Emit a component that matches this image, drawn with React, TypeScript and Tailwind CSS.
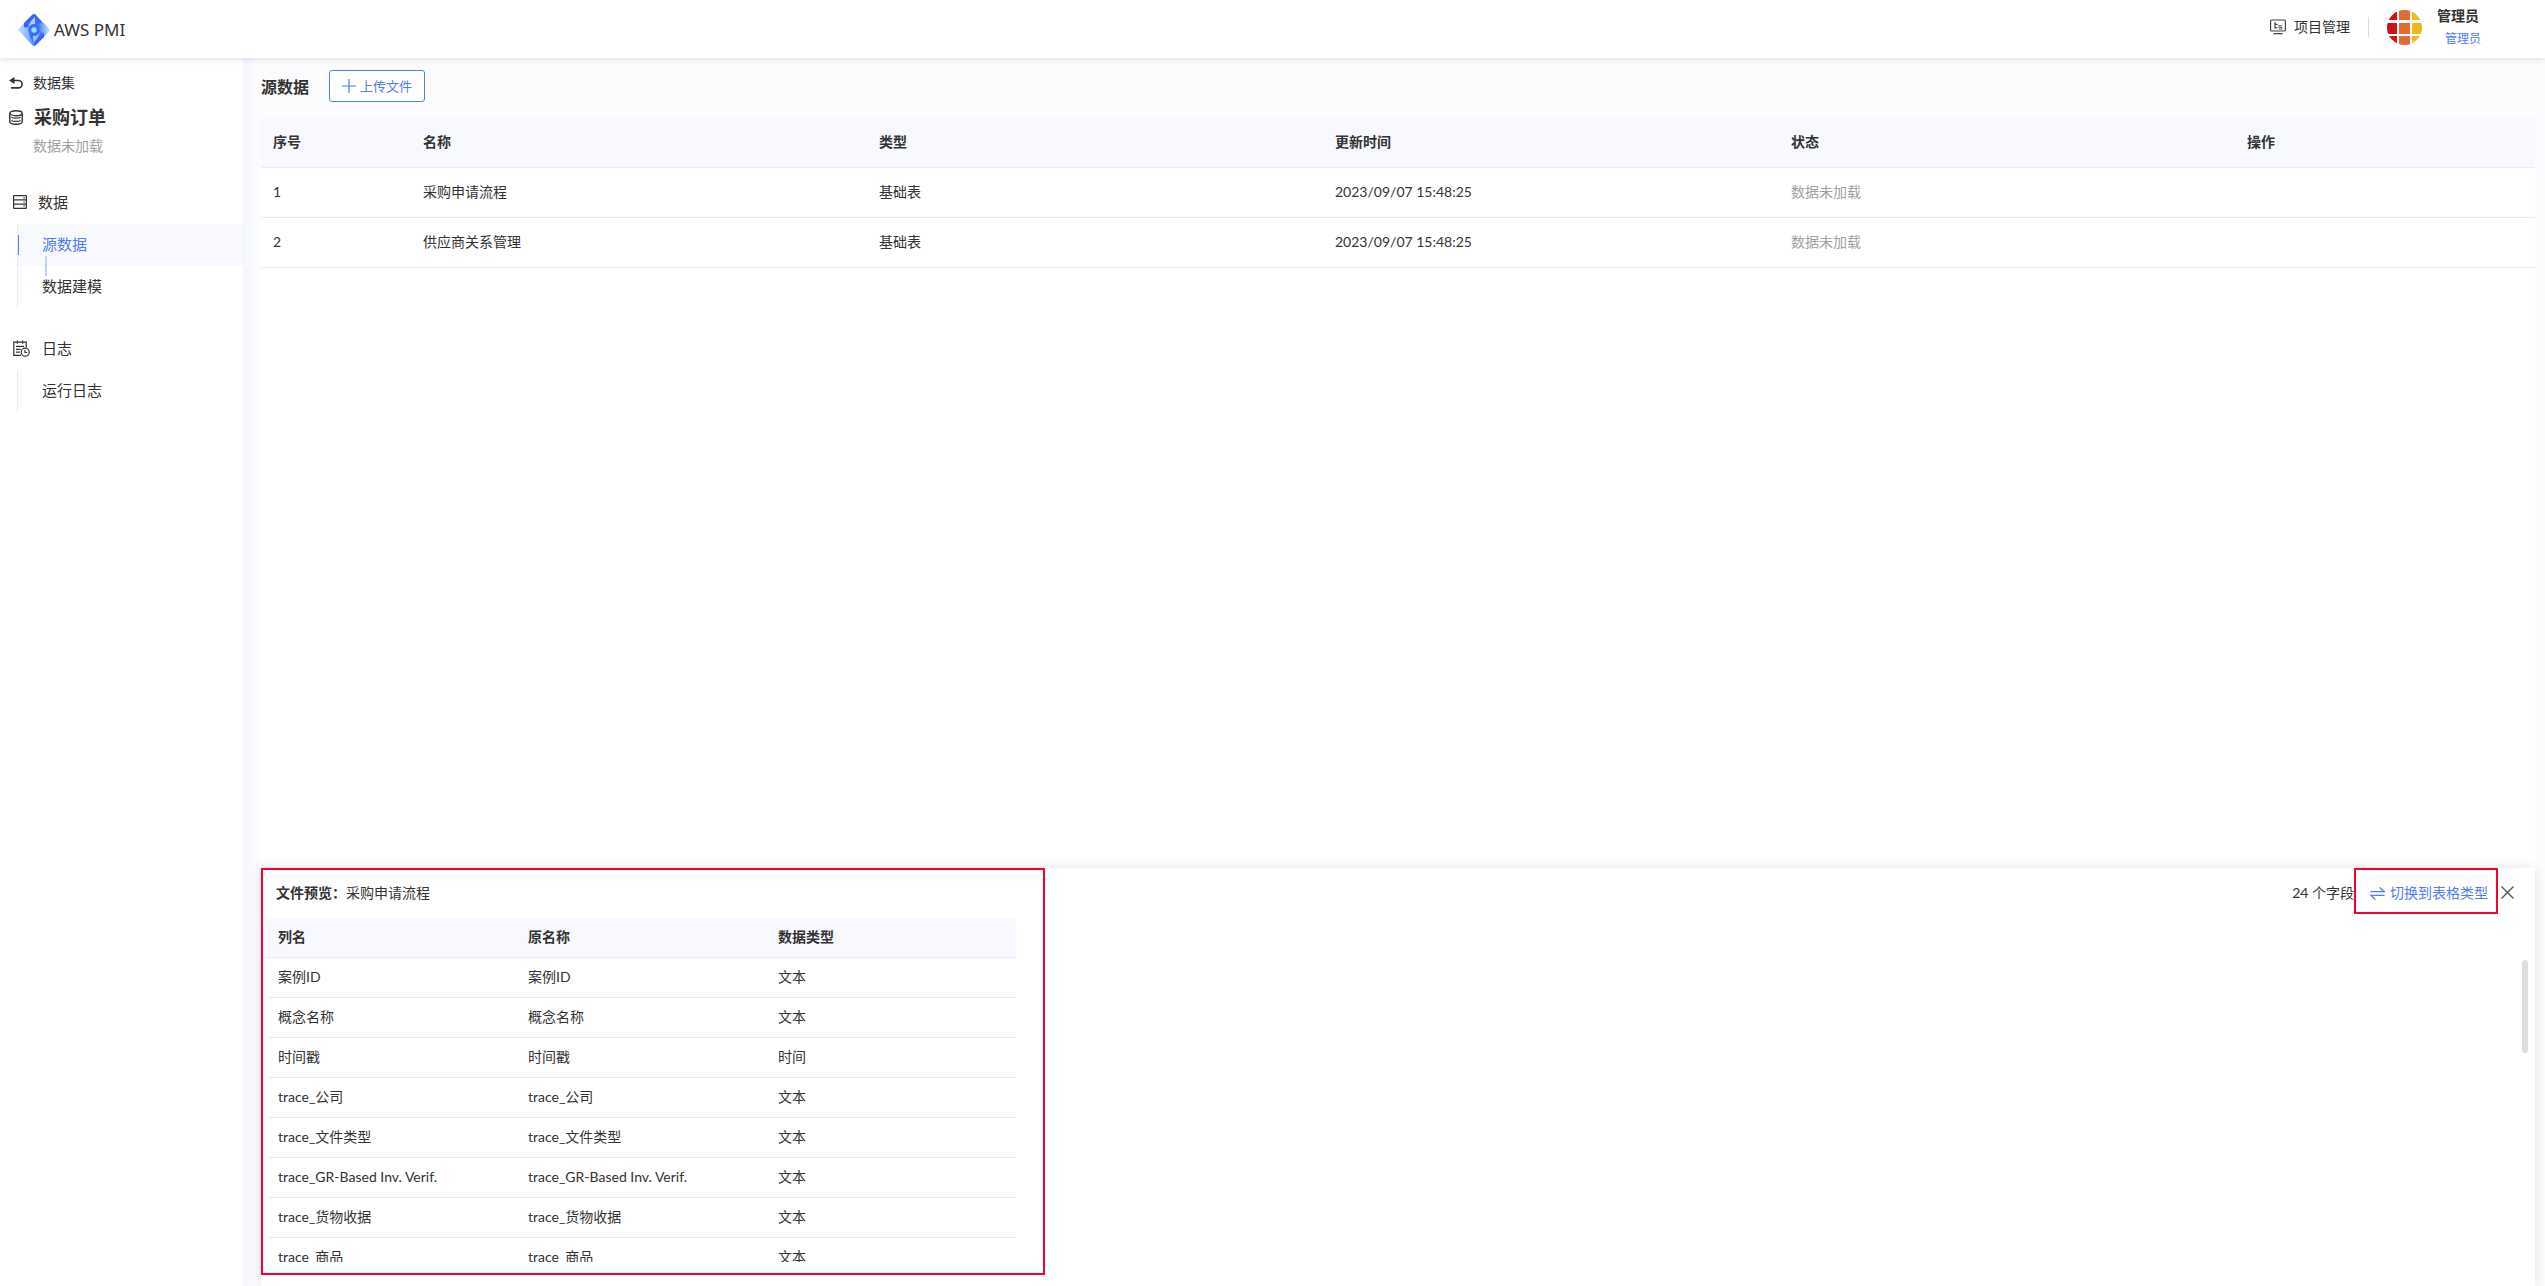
import { useState } from "react";

const sources = [
    { id: 1, name: "采购申请流程", type: "基础表", updated: "2023/09/07 15:48:25", status: "数据未加载" },
    { id: 2, name: "供应商关系管理", type: "基础表", updated: "2023/09/07 15:48:25", status: "数据未加载" },
];

const fields = [
    { name: "案例ID", type: "文本" },
    { name: "概念名称", type: "文本" },
    { name: "时间戳", type: "时间" },
    { name: "trace_公司", type: "文本" },
    { name: "trace_文件类型", type: "文本" },
    { name: "trace_GR-Based Inv. Verif.", type: "文本" },
    { name: "trace_货物收据", type: "文本" },
    { name: "trace_商品", type: "文本" },
];

const cellStyle = "border-b border-[#ebecf3] px-3 pb-[2px]";

const Logo = () => (
    <svg width="32" height="32" viewBox="0 0 32 32">
        <defs>
            <linearGradient id="logoDark" x1="0" y1="0" x2="1" y2="1">
                <stop offset="0" stopColor="#2f5bf6" />
                <stop offset="1" stopColor="#4b7dff" />
            </linearGradient>
            <linearGradient id="logoLeft" x1="0" y1="0" x2="1" y2="0">
                <stop offset="0" stopColor="#c4e6ff" />
                <stop offset="1" stopColor="#5f97fb" />
            </linearGradient>
            <linearGradient id="logoRight" x1="0" y1="0" x2="1" y2="0">
                <stop offset="0" stopColor="#4f86fa" />
                <stop offset="1" stopColor="#c4e6ff" />
            </linearGradient>
        </defs>
        <path d="M16 0q1 0 2 1l8 9v7L16 32 6 22V9l8-8q1-1 2-1z" fill="url(#logoDark)" />
        <path d="M6 9v4q2 1 4 0l2 10 4 9q-1 0-2-1L0 16z" fill="url(#logoLeft)" />
        <path d="M26 23v-4q-2-1-4 0L21 9l5 0 6 7z" fill="url(#logoRight)" />
        <path d="M26 18v5l-8 8q-1 1-2 1l2-9q5-1 8-5z" fill="#3566f8" />
        <path d="M17 3v7q-6 0-7 5 0-6 7-12z" fill="#a9d2ff" />
        <path d="M15 29v-7q6 0 7-5 0 6-7 12z" fill="#8fc0ff" />
        <circle cx="16" cy="16" r="5.5" fill="#3b70f8" />
        <circle cx="16" cy="16" r="2.7" fill="#8fe0ff" />
    </svg>
);

const Avatar = () => (
    <svg width="35" height="35" viewBox="0 0 35 35">
        <defs>
            <clipPath id="avatarClip"><circle cx="17.5" cy="17.5" r="17.5" /></clipPath>
        </defs>
        <g clipPath="url(#avatarClip)">
            <path d="M0 0h10v10H0zM0 13h10v11H0zM0 26h10v9H0z" fill="#cc1418" />
            <path d="M12 0h11v10H12zM12 13h11v11H12zM12 26h11v9H12z" fill="#e06c35" />
            <path d="M25 0h10v10H25zM25 13h10v11H25zM25 26h10v9H25z" fill="#f0b81a" />
        </g>
    </svg>
);

const ProjectIcon = () => (
    <svg width="16" height="16" viewBox="0 0 16 16" fill="none" stroke="#444" strokeWidth="1.2">
        <rect x="0.6" y="1" width="14.8" height="11" rx="0.8" />
        <path d="M3.5 14.6h9M5 3v5.8h2.4M5 5.4h2.6" />
        <path d="M8 6.8h4.2M8.6 8.4h3.8M8.6 10h3.8" strokeWidth="0.9" />
    </svg>
);

const BackIcon = () => (
    <svg width="14" height="12" viewBox="0 0 14 12" fill="none">
        <path d="M4 3.5h5.4a3.7 3.7 0 0 1 0 7.4H2" stroke="#333" strokeWidth="1.6" />
        <path d="M0 3.5 5.5 0v7z" fill="#333" />
    </svg>
);

const DatabaseIcon = () => (
    <svg width="14" height="15" viewBox="0 0 14 15" fill="none" stroke="#333" strokeWidth="1.4">
        <ellipse cx="7" cy="3.2" rx="6.2" ry="2.5" />
        <path d="M0.8 3.2v8.4c0 1.5 2.6 2.7 6.2 2.7s6.2-1.2 6.2-2.7V3.2" />
        <path d="M2.4 7.2c1 .7 2.6 1 4.6 1s3.6-.3 4.6-1M2.4 10.4c1 .7 2.6 1 4.6 1s3.6-.3 4.6-1" strokeWidth="1.2" />
    </svg>
);

const RowsIcon = () => (
    <svg width="14" height="14" viewBox="0 0 14 14" fill="none" stroke="#333" strokeWidth="1.2">
        <rect x="0.6" y="0.6" width="12.8" height="12.8" rx="0.6" />
        <path d="M0.6 4.9h12.8M0.6 9.1h12.8M10.4 2.8h1.4M10.4 7h1.4M10.4 11.2h1.4" />
    </svg>
);

const LogIcon = () => (
    <svg width="17" height="17" viewBox="0 0 17 17" fill="none" stroke="#333" strokeWidth="1.2">
        <path d="M8 15.4H0.8V2.2h12.4v5.4M4.4 0.4v3.4M9.6 0.4v3.4M3 6.4h8M3 9.3h4.8M3 12.2h3.8" />
        <circle cx="12.2" cy="12.2" r="4" />
        <path d="M12 9.8v2.7h2.2" />
    </svg>
);

const SwapIcon = () => (
    <svg width="15" height="13" viewBox="0 0 15 13" fill="none" stroke="#4c7dfa" strokeWidth="1.3">
        <path d="M0.5 4.6h13.6L9.6 0.6M14.5 8.4H0.9l4.5 4" />
    </svg>
);

const Header = () => (
    <header className="relative z-10 flex h-[58px] shrink-0 items-center justify-between bg-white pr-[64px] pl-[18px] shadow-[0_1px_6px_rgba(40,45,80,0.16)]">
        <div className="flex items-center gap-1 pt-[2px]">
            <Logo />
            <span className="font-['Noto_Sans'] text-[17px] leading-6">AWS PMI</span>
        </div>

        <div className="flex items-center pb-1">
            <a href="#projects" className="flex items-center gap-2">
                <ProjectIcon />
                <span>项目管理</span>
            </a>
            <div className="mx-[18px] h-5 w-px bg-[#dcdcdc]" />
            <Avatar />
            <div className="ml-[15px] pt-[2px]">
                <div className="leading-[22px] font-bold">管理员</div>
                <div className="pl-2 text-[12px] leading-6 text-[#4c7dfa]">管理员</div>
            </div>
        </div>
    </header>
);

const Sidebar = () => {
    const [active, setActive] = useState("source");

    const itemStyle = "block h-[42px] w-full cursor-pointer pb-[2px] pl-6 text-left text-[15px]";
    const activeStyle = `${itemStyle} bg-[#f8f9ff] text-[#4c7dfa]`;

    return (
        <aside className="w-[243px] shrink-0 bg-white pt-[10px]">
            <a href="#datasets" className="flex h-[30px] items-center gap-[10px] pl-[9px]">
                <BackIcon />
                <span>数据集</span>
            </a>
            <div className="flex h-[38px] items-center gap-[11px] pl-[9px]">
                <DatabaseIcon />
                <h1 className="text-[18px] font-bold">采购订单</h1>
            </div>
            <div className="pl-[33px] leading-5 text-[#a0a0a0]">数据未加载</div>

            <div className="mt-6 flex h-11 items-center gap-[11px] pl-[13px] text-[15px]">
                <RowsIcon />
                <span>数据</span>
            </div>
            <nav className="relative ml-[17px] border-l border-[#ececec]">
                <button className={active === "source" ? activeStyle : itemStyle} onClick={() => setActive("source")}>源数据</button>
                <button className={active === "model" ? activeStyle : itemStyle} onClick={() => setActive("model")}>数据建模</button>
                {active === "source" && <div className="absolute top-[11px] left-0 h-5 w-px bg-[#4c7dfa]" />}
                {/* link between the two steps */}
                <div className="absolute top-8 left-[27px] h-5 w-[2px] bg-[#c0d1fd]" />
            </nav>

            <div className="mt-[18px] flex h-11 items-center gap-3 pl-[13px] text-[15px]">
                <LogIcon />
                <span>日志</span>
            </div>
            <nav className="ml-[17px] border-l border-[#ececec]">
                <button className={active === "log" ? activeStyle : itemStyle} onClick={() => setActive("log")}>运行日志</button>
            </nav>
        </aside>
    );
};

const SourceTable = () => (
    <table className="w-full table-fixed border-separate border-spacing-0 text-left">
        <thead>
            <tr className="h-[50px] bg-[#f8f9ff]">
                <th className={`${cellStyle} w-[150px]`}>序号</th>
                <th className={cellStyle}>名称</th>
                <th className={cellStyle}>类型</th>
                <th className={cellStyle}>更新时间</th>
                <th className={cellStyle}>状态</th>
                <th className={`${cellStyle} w-[300px]`}>操作</th>
            </tr>
        </thead>
        <tbody>
            {sources.map((row) => (
                <tr key={row.id} className="h-[50px]">
                    <td className={cellStyle}>{row.id}</td>
                    <td className={cellStyle}>{row.name}</td>
                    <td className={cellStyle}>{row.type}</td>
                    <td className={cellStyle}>{row.updated}</td>
                    <td className={`${cellStyle} text-[#a0a0a0]`}>{row.status}</td>
                    <td className={cellStyle}></td>
                </tr>
            ))}
        </tbody>
    </table>
);

const FilePreview = () => (
    <section className="flex h-[418px] shrink-0 items-start justify-between bg-white shadow-[0_0_12px_rgba(0,0,0,0.1)]">
        <div className="flex h-[407px] w-[784px] flex-col border-2 border-[#f5002f] pr-[27px] pb-[11px] pl-[3px]">
            <div className="flex h-12 shrink-0 items-center pb-[2px] pl-[10px]">
                <span className="font-bold">文件预览：</span>
                <span>采购申请流程</span>
            </div>
            <div className="min-h-0 overflow-hidden">
                <table className="w-full table-fixed border-separate border-spacing-0 text-left">
                    <thead>
                        <tr className="h-10 bg-[#f8f9ff]">
                            <th className={cellStyle}>列名</th>
                            <th className={cellStyle}>原名称</th>
                            <th className={cellStyle}>数据类型</th>
                        </tr>
                    </thead>
                    <tbody>
                        {fields.map((field) => (
                            <tr key={field.name} className="h-10">
                                <td className={cellStyle}>{field.name}</td>
                                <td className={cellStyle}>{field.name}</td>
                                <td className={cellStyle}>{field.type}</td>
                            </tr>
                        ))}
                    </tbody>
                </table>
            </div>
        </div>

        <div className="flex flex-col items-end pr-[7px]">
            <div className="flex h-[50px] items-center pr-[14px]">
                <span>24 个字段</span>
                <button className="flex h-[46px] cursor-pointer items-center gap-[5px] self-start border-2 border-[#f5002f] pt-1 pr-2 pl-[14px] text-[#4c7dfa]">
                    <SwapIcon />
                    <span>切换到表格类型</span>
                </button>
                <button aria-label="关闭" className="ml-[3px] cursor-pointer pb-[2px]">
                    <svg width="13" height="13" viewBox="0 0 13 13" stroke="#555" strokeWidth="1.4">
                        <path d="M0.5 0.5l12 12M12.5 0.5l-12 12" />
                    </svg>
                </button>
            </div>
            <div className="mt-[42px] h-[93px] w-[6px] rounded-full bg-[#dddee0]" />
        </div>
    </section>
);

const App = () => {

    return (
        <div className="flex h-screen flex-col overflow-hidden bg-[#fcfcfe] font-['Lato','Noto_Sans_CJK_SC',sans-serif] text-[14px] leading-5 text-[#333]">
            <Header />

            <div className="flex min-h-0 flex-1">
                <Sidebar />

                <main className="flex min-w-0 flex-1 flex-col bg-linear-to-r from-[#f3f6ff] to-[#fcfcfe] to-[12px] pr-[10px] pl-[18px]">
                    <div className="flex h-[60px] shrink-0 items-center gap-5 pb-1">
                        <h2 className="pt-[2px] text-[16px] font-bold">源数据</h2>
                        <button className="flex h-8 w-24 cursor-pointer items-center justify-center gap-1 rounded-[3px] border border-[#4c7dfa] bg-white text-[13px] text-[#4c7dfa]">
                            <svg width="14" height="14" viewBox="0 0 14 14" stroke="#4c7dfa" strokeWidth="1.2">
                                <path d="M7 0v14M0 7h14" />
                            </svg>
                            <span>上传文件</span>
                        </button>
                    </div>
                    <div className="min-h-0 flex-1 bg-white">
                        <SourceTable />
                    </div>
                    <FilePreview />
                </main>
            </div>
        </div>
    );
};

export default App;
